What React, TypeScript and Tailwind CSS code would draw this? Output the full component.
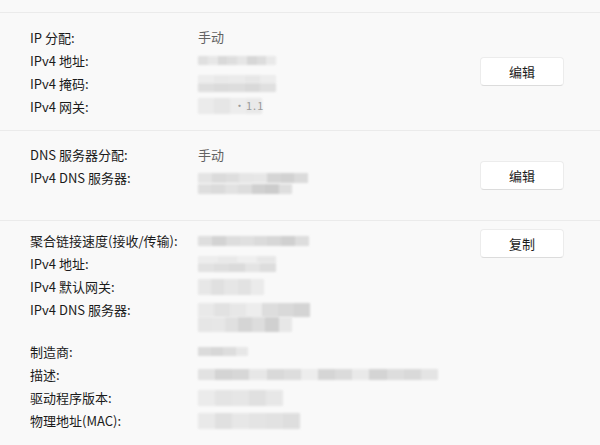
import React from 'react';

const font = { fontFamily: '"Noto Sans CJK SC", "Noto Sans", sans-serif' };

// blurred placeholder made of grey blocks
function Smudge({ w, h = 10, shades }: { w: number; h?: number; shades: string[] }) {
  return (
    <div className="flex blur-[1px] opacity-90" style={{ width: w, height: h }}>
      {shades.map((c, i) => (
        <div key={i} className="flex-1" style={{ background: c }} />
      ))}
    </div>
  );
}

function Row({ label, children, tall }: { label: string; children?: React.ReactNode; tall?: boolean }) {
  return (
    <div className={`flex ${tall ? 'h-[42px]' : 'h-[23px]'}`}>
      <div className="w-[168px] shrink-0 leading-[23px] text-[#1b1b1b]">{label}</div>
      <div className="flex flex-col">{children}</div>
    </div>
  );
}

function Val({ children }: { children: React.ReactNode }) {
  return <div className="h-[23px] flex items-center">{children}</div>;
}

function Btn({ text }: { text: string }) {
  return (
    <button className="w-[84px] h-[29px] rounded-[4px] bg-white border border-[#ececec] border-b-[#dcdcdc] text-[13px] text-[#1b1b1b]">
      {text}
    </button>
  );
}

export default function App() {
  return (
    <div className="w-[600px] h-[445px] overflow-hidden bg-[#f9f9f9] pt-[12px] text-[13px]" style={font}>
      {/* IP */}
      <div className="border-t border-[#ebebeb] h-[118px] flex items-center pl-[30px] pr-[36px]">
        <div className="flex-1 flex flex-col">
          <Row label="IP 分配:">
            <Val><span className="text-[#626262]">手动</span></Val>
          </Row>
          <Row label="IPv4 地址:">
            <Val><Smudge w={78} h={9} shades={['#dedede', '#e6e6e6', '#d6d6d6', '#dcdcdc', '#e4e4e4', '#d4d4d4', '#dadada', '#e8e8e8']} /></Val>
          </Row>
          <Row label="IPv4 掩码:">
            <Val>
              <div className="flex flex-col">
                <Smudge w={78} h={8} shades={['#ececec', '#e8e8e8', '#eaeaea', '#e6e6e6', '#ececec']} />
                <Smudge w={78} h={9} shades={['#dcdcdc', '#d8d8d8', '#dadada', '#d6d6d6', '#dedede']} />
              </div>
            </Val>
          </Row>
          <Row label="IPv4 网关:">
            <Val>
              <div className="relative">
                <Smudge w={64} h={16} shades={['#eaeaea', '#e4e4e4', '#ececec', '#e8e8e8']} />
                <span className="absolute left-[36px] top-[-1px] text-[11px] text-[#9a9a9a] tracking-[1px]">·1.1</span>
              </div>
            </Val>
          </Row>
        </div>
        <Btn text="编辑" />
      </div>

      {/* DNS */}
      <div className="border-t border-[#ebebeb] h-[90px] flex items-center pl-[30px] pr-[36px]">
        <div className="flex-1 flex flex-col">
          <Row label="DNS 服务器分配:">
            <Val><span className="text-[#626262]">手动</span></Val>
          </Row>
          <Row label="IPv4 DNS 服务器:" tall>
            <Val><Smudge w={110} h={10} shades={['#e2e2e2', '#d8d8d8', '#dcdcdc', '#e4e4e4', '#e6e6e6', '#d2d2d2', '#cecece', '#d8d8d8']} /></Val>
            <div className="-mt-[5px]"><Smudge w={94} h={10} shades={['#dcdcdc', '#d8d8d8', '#e0e0e0', '#dadada', '#cccccc', '#c8c8c8', '#dcdcdc']} /></div>
          </Row>
        </div>
        <Btn text="编辑" />
      </div>

      {/* properties */}
      <div className="border-t border-[#ebebeb] flex items-start pl-[30px] pr-[36px] pt-[8px]">
        <div className="flex-1 flex flex-col">
          <Row label="聚合链接速度(接收/传输):">
            <Val><Smudge w={111} h={10} shades={['#dcdcdc', '#cfcfcf', '#dadada', '#dedede', '#d8d8d8', '#d4d4d4', '#cccccc', '#dadada']} /></Val>
          </Row>
          <Row label="IPv4 地址:">
            <Val>
              <div className="flex flex-col">
                <Smudge w={78} h={7} shades={['#ececec', '#e8e8e8', '#eeeeee', '#e6e6e6']} />
                <Smudge w={78} h={9} shades={['#e0e0e0', '#dcdcdc', '#d8d8d8', '#e2e2e2', '#dadada']} />
              </div>
            </Val>
          </Row>
          <Row label="IPv4 默认网关:">
            <Val><Smudge w={66} h={16} shades={['#e6e6e6', '#dedede', '#e4e4e4', '#e0e0e0', '#eaeaea']} /></Val>
          </Row>
          <Row label="IPv4 DNS 服务器:" tall>
            <Val><Smudge w={112} h={14} shades={['#e8e8e8', '#e0e0e0', '#e6e6e6', '#ececec', '#dadada', '#d6d6d6', '#d0d0d0']} /></Val>
            <div className="-mt-[4px]"><Smudge w={94} h={15} shades={['#e4e4e4', '#e6e6e6', '#dedede', '#d2d2d2', '#dadada', '#cccccc', '#e6e6e6']} /></div>
          </Row>
          <Row label="制造商:">
            <Val><Smudge w={50} h={9} shades={['#d8d8d8', '#d4d4d4', '#dadada', '#e6e6e6']} /></Val>
          </Row>
          <Row label="描述:">
            <Val><Smudge w={240} h={11} shades={['#e0e0e0', '#d0d0d0', '#d4d4d4', '#e6e6e6', '#d6d6d6', '#dadada', '#ececec', '#d2d2d2', '#d8d8d8', '#e8e8e8', '#d0d0d0', '#dadada', '#d6d6d6', '#e2e2e2']} /></Val>
          </Row>
          <Row label="驱动程序版本:">
            <Val><Smudge w={85} h={16} shades={['#eaeaea', '#e2e2e2', '#e4e4e4', '#dedede', '#e6e6e6']} /></Val>
          </Row>
          <Row label="物理地址(MAC):">
            <Val><Smudge w={102} h={16} shades={['#e8e8e8', '#dedede', '#e6e6e6', '#e2e2e2', '#e0e0e0', '#dcdcdc']} /></Val>
          </Row>
        </div>
        <Btn text="复制" />
      </div>
    </div>
  );
}
